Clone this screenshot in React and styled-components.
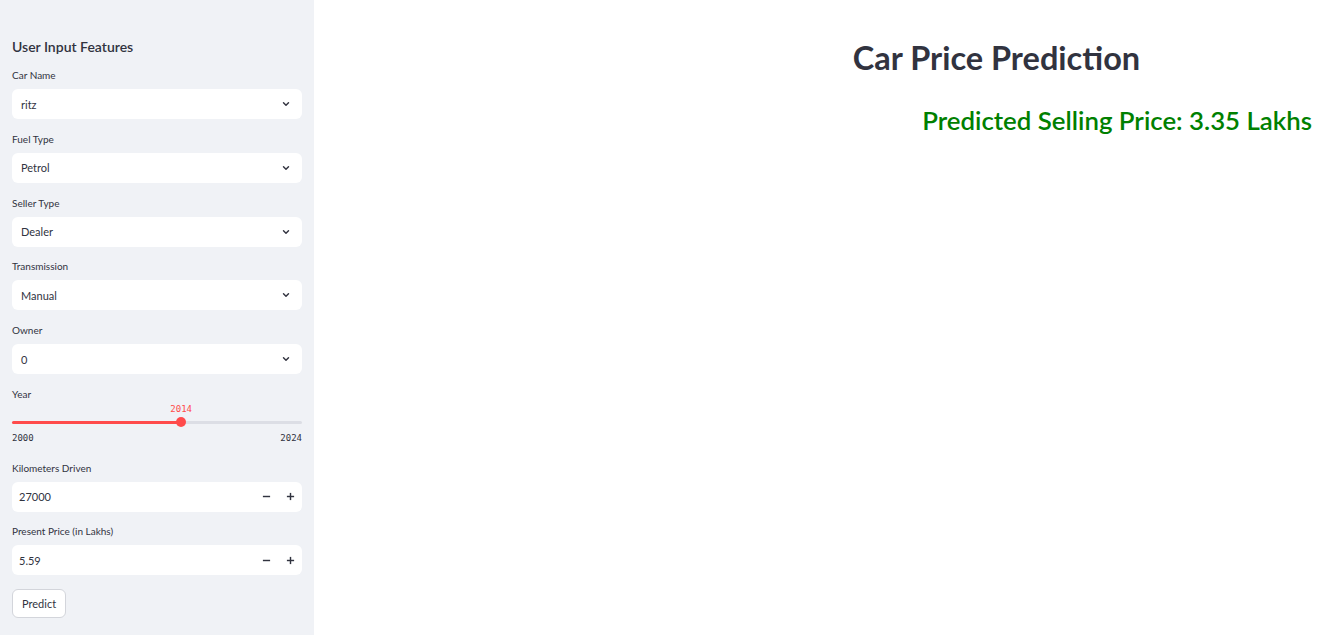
import React from "react";
import styled, { createGlobalStyle } from "styled-components";

const GlobalStyle = createGlobalStyle`
  html, body {
    margin: 0;
    padding: 0;
    background: #ffffff;
    font-family: "Source Sans Pro", Lato, "Noto Sans", sans-serif;
    color: #31333f;
  }
`;

const COLORS = {
  sidebar: "#f0f2f6",
  text: "#31333f",
  red: "#ff4b4b",
  track: "#dcdee5",
  green: "#008000",
};

const selects = [
  { label: "Car Name", value: "ritz" },
  { label: "Fuel Type", value: "Petrol" },
  { label: "Seller Type", value: "Dealer" },
  { label: "Transmission", value: "Manual" },
  { label: "Owner", value: "0" },
];

const numbers = [
  { label: "Kilometers Driven", value: "27000" },
  { label: "Present Price (in Lakhs)", value: "5.59" },
];

const Chevron = () => (
  <svg width="10" height="10" viewBox="0 0 24 24" fill="none" stroke={COLORS.text} strokeWidth="3.4" strokeLinecap="round" strokeLinejoin="round">
    <path d="M6 9l6 6 6-6" />
  </svg>
);

const Minus = () => (
  <svg width="9" height="9" viewBox="0 0 10 10">
    <rect x="1" y="4.2" width="8" height="1.6" fill={COLORS.text} />
  </svg>
);

const Plus = () => (
  <svg width="9" height="9" viewBox="0 0 10 10">
    <rect x="1" y="4.2" width="8" height="1.6" fill={COLORS.text} />
    <rect x="4.2" y="1" width="1.6" height="8" fill={COLORS.text} />
  </svg>
);

export default function App() {
  const year = { min: 2000, max: 2024, value: 2014 };
  const pct = ((year.value - year.min) / (year.max - year.min)) * 100;
  return (
    <>
      <GlobalStyle />
      <Page>
        <Sidebar>
          <SideTitle>User Input Features</SideTitle>
          {selects.map((s) => (
            <Field key={s.label}>
              <Label>{s.label}</Label>
              <SelectBox>
                <span>{s.value}</span>
                <Chevron />
              </SelectBox>
            </Field>
          ))}
          <Field>
            <Label>Year</Label>
            <Slider>
              <SliderValue style={{ left: `${pct}%` }}>{year.value}</SliderValue>
              <Track>
                <Fill style={{ width: `${pct}%` }} />
                <Thumb style={{ left: `${pct}%` }} />
              </Track>
              <Ticks>
                <span>{year.min}</span>
                <span>{year.max}</span>
              </Ticks>
            </Slider>
          </Field>
          {numbers.map((n) => (
            <Field key={n.label}>
              <Label>{n.label}</Label>
              <NumberBox>
                <span>{n.value}</span>
                <Steps>
                  <StepButton><Minus /></StepButton>
                  <StepButton><Plus /></StepButton>
                </Steps>
              </NumberBox>
            </Field>
          ))}
          <Button>Predict</Button>
        </Sidebar>
        <Main>
          <Content>
            <Title>Car Price Prediction</Title>
            <Result>Predicted Selling Price: 3.35 Lakhs</Result>
          </Content>
        </Main>
      </Page>
    </>
  );
}

const Page = styled.div`
  display: flex;
  width: 1326px;
  height: 635px;
  overflow: hidden;
`;

const Sidebar = styled.aside`
  width: 314px;
  flex-shrink: 0;
  background: ${COLORS.sidebar};
  box-sizing: border-box;
  padding: 38px 12px 0 12px;
  display: flex;
  flex-direction: column;
`;

const SideTitle = styled.h3`
  margin: 0 0 13px;
  font-size: 14px;
  font-weight: 600;
  line-height: 18px;
  color: ${COLORS.text};
`;

const Field = styled.div`
  margin-bottom: 13.75px;
`;

const Label = styled.div`
  font-size: 10px;
  line-height: 13px;
  color: ${COLORS.text};
  margin-bottom: 7px;
`;

const SelectBox = styled.div`
  height: 30px;
  background: #fff;
  border-radius: 6px;
  display: flex;
  align-items: center;
  justify-content: space-between;
  padding: 0 11px 0 9px;
  font-size: 11px;
  color: ${COLORS.text};
`;

const Slider = styled.div`
  position: relative;
  padding-top: 13px;
`;

const SliderValue = styled.span`
  position: absolute;
  top: -4px;
  transform: translateX(-50%);
  font-family: "DejaVu Sans Mono", "Liberation Mono", monospace;
  font-size: 9px;
  color: ${COLORS.red};
`;

const Track = styled.div`
  position: relative;
  height: 3px;
  border-radius: 2px;
  background: ${COLORS.track};
`;

const Fill = styled.div`
  height: 100%;
  border-radius: 2px;
  background: ${COLORS.red};
`;

const Thumb = styled.div`
  position: absolute;
  top: 50%;
  width: 10px;
  height: 10px;
  border-radius: 50%;
  background: ${COLORS.red};
  transform: translate(-50%, -50%);
`;

const Ticks = styled.div`
  display: flex;
  justify-content: space-between;
  margin-top: 9px;
  font-family: "DejaVu Sans Mono", "Liberation Mono", monospace;
  font-size: 9px;
  color: ${COLORS.text};
  margin-bottom: 5px;
`;

const NumberBox = styled.div`
  height: 30px;
  background: #fff;
  border-radius: 6px;
  display: flex;
  align-items: center;
  justify-content: space-between;
  padding: 0 0 0 7px;
  font-size: 11px;
  color: ${COLORS.text};
`;

const Steps = styled.div`
  display: flex;
  height: 100%;
`;

const StepButton = styled.div`
  width: 24px;
  display: flex;
  align-items: center;
  justify-content: center;
`;

const Button = styled.button`
  align-self: flex-start;
  height: 29px;
  padding: 0 9px;
  font-family: inherit;
  font-size: 11px;
  color: ${COLORS.text};
  background: #fff;
  border: 1px solid #d3d5db;
  border-radius: 6px;
`;

const Main = styled.main`
  flex: 1;
  display: flex;
  justify-content: flex-end;
`;

const Content = styled.div`
  width: 659px;
  padding-top: 37px;
  display: flex;
  flex-direction: column;
`;

const Title = styled.h1`
  margin: 0;
  text-align: center;
  font-size: 32.5px;
  font-weight: 700;
  line-height: 42px;
  color: ${COLORS.text};
`;

const Result = styled.h2`
  margin: 24px 14px 0 0;
  text-align: right;
  font-size: 25.8px;
  font-weight: 600;
  line-height: 34px;
  color: ${COLORS.green};
`;
